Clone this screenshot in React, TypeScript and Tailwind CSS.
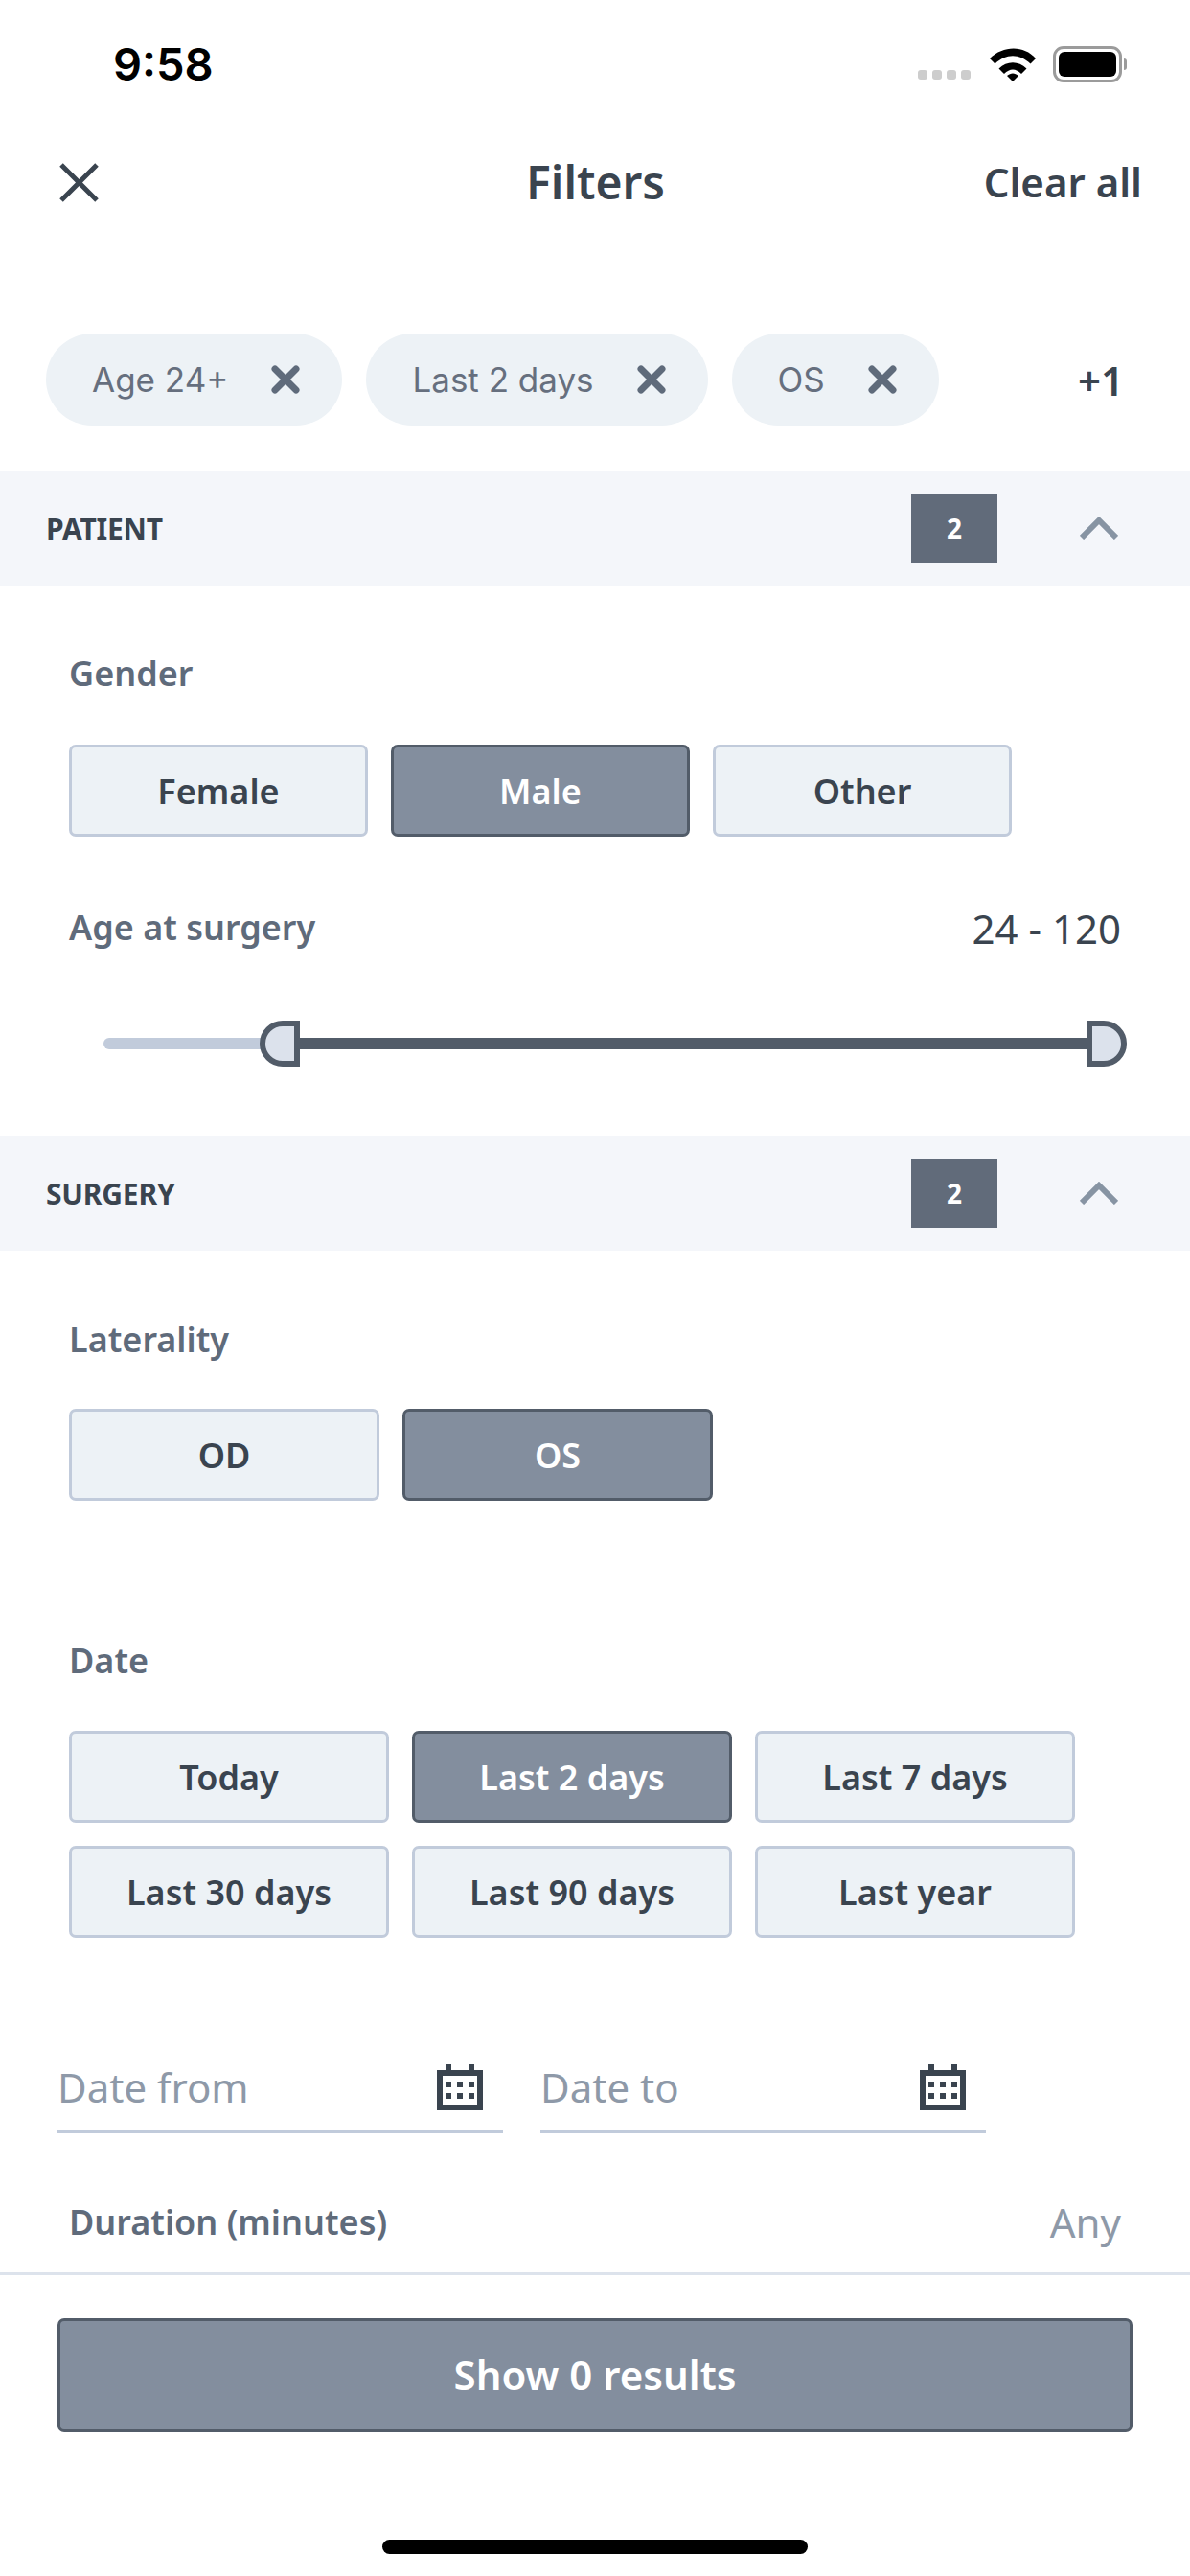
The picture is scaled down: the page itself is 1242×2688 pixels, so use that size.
const font = { fontFamily: '"Noto Sans", sans-serif' };

function Calendar() {
  return (
    <svg width="48" height="48" viewBox="0 0 48 48" className="shrink-0" fill="#3a444f">
      <rect x="9" y="0" width="6" height="8" />
      <rect x="33" y="0" width="6" height="8" />
      <path fillRule="evenodd" d="M0 6h48v42H0zM6 12v30h36V12z" />
      {[9, 21, 33].map((x) =>
        [18, 30].map((y) => <rect key={`${x}-${y}`} x={x} y={y} width="6" height="6" />)
      )}
    </svg>
  );
}

function Cross({ size, stroke, color, round }: { size: number; stroke: number; color: string; round?: boolean }) {
  const inset = round ? 4 : 2;
  return (
    <svg width={size} height={size} viewBox={`0 0 ${size} ${size}`} className="shrink-0" fill="none">
      <path
        d={`M${inset} ${inset}L${size - inset} ${size - inset}M${size - inset} ${inset}L${inset} ${size - inset}`}
        stroke={color}
        strokeWidth={stroke}
        strokeLinecap={round ? 'round' : 'butt'}
      />
    </svg>
  );
}

function Chip({ label }: { label: string }) {
  return (
    <div
      style={{ fontFamily: 'Inter, sans-serif' }}
      className="flex h-[96px] items-center gap-[45px] rounded-full bg-[#edf2f6] pl-[48px] pr-[44px] text-[35px] text-[#666f7e]"
    >
      <span className="leading-none">{label}</span>
      <Cross size={30} stroke={7} color="#5f6b7b" round />
    </div>
  );
}

function SectionBar({ title }: { title: string }) {
  return (
    <div className="flex h-[120px] items-center bg-[#f4f6fa] pl-[48px] pr-[75px]">
      <span className="text-[30px] font-bold tracking-[-0.2px] text-[#3a444f]">{title}</span>
      <div className="ml-auto flex h-[72px] w-[90px] items-center justify-center bg-[#616b7a] text-[28px] font-bold text-white">2</div>
      <svg width="40" height="24" viewBox="0 0 40 24" fill="none" className="ml-[86px]">
        <path d="M2 22L20 4L38 22" stroke="#8794a3" strokeWidth="6" />
      </svg>
    </div>
  );
}

function Toggle({ label, active, width }: { label: string; active?: boolean; width: string }) {
  return (
    <div
      className={`flex h-[96px] items-center justify-center rounded-[7px] border-[3px] pt-[2px] text-[36px] font-semibold ${width} ${
        active ? 'border-[#525c69] bg-[#838e9e] text-white' : 'border-[#c1cbdb] bg-[#edf2f6] text-[#3a444f]'
      }`}
    >
      {label}
    </div>
  );
}

function RowLabel({ children, className }: { children: string; className: string }) {
  return <div className={`flex h-[50px] items-center pl-[72px] text-[36px] font-semibold text-[#5f6b7b] ${className}`}>{children}</div>;
}

function DateField({ label }: { label: string }) {
  return (
    <div className="flex w-[465px] items-center justify-between border-b-[3px] border-[#c1cbdb] pb-[21px] pr-[21px]">
      <span className="text-[42px] leading-[48px] text-[#8e99a8]">{label}</span>
      <Calendar />
    </div>
  );
}

function Thumb({ side }: { side: 'left' | 'right' }) {
  return (
    <div
      className={`h-[48px] w-[42px] shrink-0 border-[6px] border-[#525c69] bg-[#dce2ec] ${
        side === 'left' ? 'rounded-l-[24px]' : 'rounded-r-[24px]'
      }`}
    />
  );
}

export default function App() {
  return (
    <div style={font} className="flex h-[2688px] w-[1242px] flex-col overflow-hidden bg-white">
      {/* Status bar */}
      <div className="flex h-[135px] shrink-0 items-start">
        <span className="ml-[118px] mt-[38px] text-[47px] font-semibold leading-[58px] text-black" style={{ fontFamily: 'Inter, sans-serif' }}>
          9:58
        </span>
        <div className="ml-auto mr-[66px] mt-[48px] flex items-end">
          <div className="mb-[3px] flex gap-[5px]">
            {[0, 1, 2, 3].map((i) => (
              <div key={i} className="h-[10px] w-[10px] rounded-[3px] bg-[#cdcdcd]" />
            ))}
          </div>
          <svg width="50" height="36" viewBox="0 0 50 36" className="ml-[19px]">
            <path d="M0 11C14 -3 36 -3 48 11L42.5 16.5C31 5.5 17 5.5 5.5 16.5Z" transform="translate(1 0)" />
            <path d="M10.5 21.5C19 13 31 13 39.5 21.5L34 27C28 21 22 21 16 27Z" />
            <path d="M19 29C23 25.5 27 25.5 31 29L25 35Z" />
          </svg>
          <div className="ml-[17px] flex items-center">
            <div className="flex h-[38px] w-[72px] items-center justify-center rounded-[11px] border-[3px] border-[#9b9b9b] bg-white">
              <div className="h-[26px] w-[60px] rounded-[6px] bg-black" />
            </div>
            <div className="ml-[2px] h-[12px] w-[3px] rounded-r-full bg-[#9b9b9b]" />
          </div>
        </div>
      </div>

      {/* Header */}
      <div className="grid h-[110px] shrink-0 grid-cols-[1fr_auto_1fr] items-center pl-[51px] pr-[50px]">
        <div className="pl-[11px]">
          <Cross size={41} stroke={5} color="#3a444f" />
        </div>
        <span className="text-[48px] font-semibold text-[#3a444f]">Filters</span>
        <span className="justify-self-end pb-[2px] text-[42px] font-semibold text-[#3a444f]">Clear all</span>
      </div>

      {/* Applied chips */}
      <div className="mt-[103px] flex shrink-0 items-center gap-[25px] pl-[48px] pr-[69px]">
        <Chip label="Age 24+" />
        <Chip label="Last 2 days" />
        <Chip label="OS" />
        <span className="ml-auto text-[42px] font-semibold text-[#3a444f]">+1</span>
      </div>

      {/* Scrolling body */}
      <div className="mt-[47px] min-h-0 flex-1 overflow-hidden">
        <SectionBar title="PATIENT" />
        <RowLabel className="mt-[67px]">Gender</RowLabel>
        <div className="mt-[49px] flex gap-[24px] pl-[72px]">
          <Toggle label="Female" width="w-[312px]" />
          <Toggle label="Male" active width="w-[312px]" />
          <Toggle label="Other" width="w-[312px]" />
        </div>
        <div className="mt-[70px] flex h-[50px] items-center justify-between px-[72px]">
          <span className="text-[36px] font-semibold text-[#5f6b7b]">Age at surgery</span>
          <span className="text-[42px] text-[#3a444f]">24 - 120</span>
        </div>
        <div className="mt-[72px] flex items-center pl-[108px] pr-[66px]">
          <div className="-mr-[2px] h-[12px] w-[165px] shrink-0 rounded-l-full bg-[#c1cbdb]" />
          <Thumb side="left" />
          <div className="h-[12px] flex-1 bg-[#525c69]" />
          <Thumb side="right" />
        </div>
        <div className="mt-[72px]">
          <SectionBar title="SURGERY" />
        </div>
        <RowLabel className="mt-[68px]">Laterality</RowLabel>
        <div className="mt-[47px] flex gap-[24px] pl-[72px]">
          <Toggle label="OD" width="w-[324px]" />
          <Toggle label="OS" active width="w-[324px]" />
        </div>
        <RowLabel className="mt-[142px]">Date</RowLabel>
        <div className="mt-[48px] grid grid-cols-[repeat(3,334px)] gap-[24px] pl-[72px]">
          <Toggle label="Today" width="w-full" />
          <Toggle label="Last 2 days" active width="w-full" />
          <Toggle label="Last 7 days" width="w-full" />
          <Toggle label="Last 30 days" width="w-full" />
          <Toggle label="Last 90 days" width="w-full" />
          <Toggle label="Last year" width="w-full" />
        </div>
        <div className="mt-[132px] flex gap-[39px] pl-[60px]">
          <DateField label="Date from" />
          <DateField label="Date to" />
        </div>
        <div className="mt-[68px] flex h-[50px] items-center justify-between px-[72px]">
          <span className="text-[36px] font-semibold text-[#5f6b7b]">Duration (minutes)</span>
          <span className="-mt-[2px] text-[42px] text-[#8e99a8]">Any</span>
        </div>
      </div>

      {/* Footer */}
      <div className="flex h-[317px] shrink-0 flex-col items-center border-t-[3px] border-[#dde3ec] px-[60px] pt-[45px]">
        <div className="flex h-[119px] w-full items-center justify-center rounded-[7px] border-[3px] border-[#525c69] bg-[#838e9e] pb-[2px] text-[42px] font-semibold text-white">
          Show 0 results
        </div>
        <div className="mt-[112px] h-[15px] w-[444px] rounded-full bg-black" />
      </div>
    </div>
  );
}
